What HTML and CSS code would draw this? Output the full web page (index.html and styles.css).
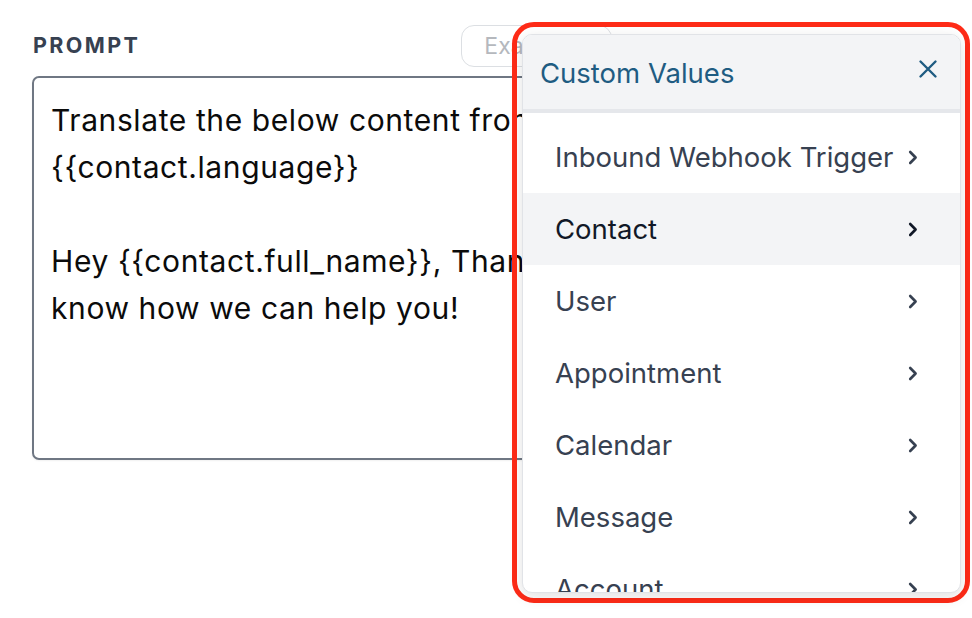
FILE: index.html
```html
<!DOCTYPE html>
<html>
<head>
<meta charset="utf-8">
<link rel="stylesheet" href="styles.css">
</head>
<body>
<div class="page">
  <div class="field">
    <div class="field-head">
      <span class="label">PROMPT</span>
      <button class="examples">Examples</button>
    </div>
    <div class="textarea">
      <p>Translate the below content from English to<br>{{contact.language}}</p>
      <p class="blank">&nbsp;</p>
      <p>Hey {{contact.full_name}}, Thanks for reaching out. Let us<br>know how we can help you!</p>
    </div>
  </div>

  <div class="highlight">
    <div class="popover">
      <div class="pop-head">
        <span class="pop-title">Custom Values</span>
        <svg class="close" width="20" height="20" viewBox="0 0 20 20"><path d="M2.5 2.5 L17.5 17.5 M17.5 2.5 L2.5 17.5" fill="none" stroke="currentColor" stroke-width="2.4" stroke-linecap="round"/></svg>
      </div>
      <ul class="pop-list">
        <li class="item"><span>Inbound Webhook Trigger</span><svg class="chev" width="10" height="15" viewBox="0 0 10 15"><path d="M2.2 2 L7.6 7.5 L2.2 13" fill="none" stroke="currentColor" stroke-width="2.6" stroke-linecap="round" stroke-linejoin="round"/></svg></li>
        <li class="item active"><span>Contact</span><svg class="chev" width="10" height="15" viewBox="0 0 10 15"><path d="M2.2 2 L7.6 7.5 L2.2 13" fill="none" stroke="currentColor" stroke-width="2.6" stroke-linecap="round" stroke-linejoin="round"/></svg></li>
        <li class="item"><span>User</span><svg class="chev" width="10" height="15" viewBox="0 0 10 15"><path d="M2.2 2 L7.6 7.5 L2.2 13" fill="none" stroke="currentColor" stroke-width="2.6" stroke-linecap="round" stroke-linejoin="round"/></svg></li>
        <li class="item"><span>Appointment</span><svg class="chev" width="10" height="15" viewBox="0 0 10 15"><path d="M2.2 2 L7.6 7.5 L2.2 13" fill="none" stroke="currentColor" stroke-width="2.6" stroke-linecap="round" stroke-linejoin="round"/></svg></li>
        <li class="item"><span>Calendar</span><svg class="chev" width="10" height="15" viewBox="0 0 10 15"><path d="M2.2 2 L7.6 7.5 L2.2 13" fill="none" stroke="currentColor" stroke-width="2.6" stroke-linecap="round" stroke-linejoin="round"/></svg></li>
        <li class="item"><span>Message</span><svg class="chev" width="10" height="15" viewBox="0 0 10 15"><path d="M2.2 2 L7.6 7.5 L2.2 13" fill="none" stroke="currentColor" stroke-width="2.6" stroke-linecap="round" stroke-linejoin="round"/></svg></li>
        <li class="item"><span>Account</span><svg class="chev" width="10" height="15" viewBox="0 0 10 15"><path d="M2.2 2 L7.6 7.5 L2.2 13" fill="none" stroke="currentColor" stroke-width="2.6" stroke-linecap="round" stroke-linejoin="round"/></svg></li>
      </ul>
    </div>
  </div>
</div>
</body>
</html>
```
FILE: styles.css
```css
* { box-sizing: border-box; }
html, body { margin: 0; padding: 0; background: #ffffff; }
body {
  width: 972px;
  height: 618px;
  overflow: hidden;
  font-family: Inter, "Noto Sans", "Liberation Sans", sans-serif;
}
.page {
  position: relative;
  width: 972px;
  height: 618px;
  padding: 25px 0 0 32px;
}
.field { width: 910px; }
.field-head {
  display: flex;
  align-items: center;
  height: 42px;
}
.label {
  font-size: 21.5px;
  font-weight: 700;
  letter-spacing: 2.4px;
  color: #374151;
  padding-left: 1px;
  margin-top: -3px;
}
.examples {
  margin-left: 321px;
  height: 42px;
  padding: 0 22px;
  border: 1.5px solid #dcdfe3;
  border-radius: 13px;
  background: #ffffff;
  color: #b5b8bd;
  font-family: inherit;
  font-size: 23px;
}
.textarea {
  margin-top: 9px;
  height: 384px;
  border: 2px solid #6f7783;
  border-radius: 7px;
  padding: 19px 17px;
  overflow: hidden;
  font-size: 30px;
  line-height: 47px;
  letter-spacing: 0.6px;
  color: #0b0b0b;
  white-space: nowrap;
  box-shadow: 0 1px 2px rgba(0,0,0,0.06);
}
.textarea p { margin: 0; }

.highlight {
  position: absolute;
  left: 512px;
  top: 22px;
  width: 458px;
  height: 581px;
  border: 5px solid #fe2b17;
  border-radius: 22px;
  padding: 7px 4px 5px 5px;
  display: flex;
}
.popover {
  flex: 1;
  display: flex;
  flex-direction: column;
  background: #ffffff;
  border: 1px solid #e1e3e7;
  border-radius: 10px;
  overflow: hidden;
  box-shadow: 0 4px 14px rgba(0,0,0,0.12);
}
.pop-head {
  flex: none;
  height: 78px;
  background: #f3f4f6;
  border-bottom: 4px solid #e5e7eb;
  display: flex;
  align-items: center;
  justify-content: space-between;
  padding: 0 22px 0 17px;
}
.pop-title {
  font-size: 27.5px;
  color: #1f5c82;
  margin-top: 2px;
}
.close { color: #1f5c82; margin-top: -6px; }
.pop-list {
  list-style: none;
  margin: 0;
  padding: 8px 0 0;
}
.item {
  height: 72px;
  display: flex;
  align-items: center;
  justify-content: space-between;
  padding: 0 42px 0 32px;
  font-size: 27.5px;
  color: #374151;
}
.item .chev { color: #374151; flex: none; }
.item.active { background: #f3f4f6; color: #111827; }
.item.active .chev { color: #111827; }
```
